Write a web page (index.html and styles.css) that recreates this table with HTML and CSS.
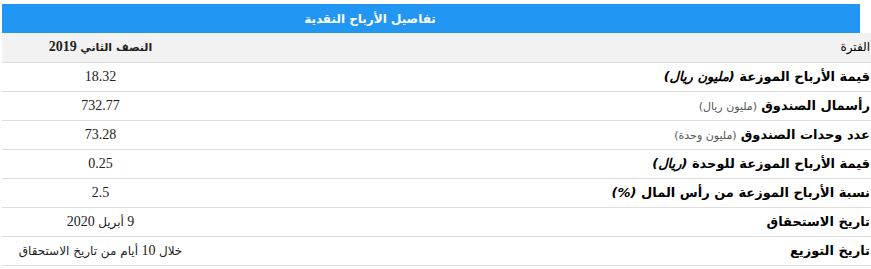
FILE: index.html
```html
<!DOCTYPE html>
<html lang="ar" dir="rtl">
<head>
<meta charset="utf-8">
<link rel="stylesheet" href="styles.css">
</head>
<body>
<div class="page">
  <div class="title-bar"><span class="title">تفاصيل الأرباح النقدية</span></div>
  <table class="details">
    <tr class="head-row">
      <td class="label">الفترة</td>
      <td class="value"><b><span class="ar">النصف الثاني</span> 2019</b></td>
    </tr>
    <tr>
      <td class="label"><b>قيمة الأرباح الموزعة <i>(مليون ريال)</i></b></td>
      <td class="value">18.32</td>
    </tr>
    <tr>
      <td class="label"><b>رأسمال الصندوق</b> <span class="unit">(مليون ريال)</span></td>
      <td class="value">732.77</td>
    </tr>
    <tr>
      <td class="label"><b>عدد وحدات الصندوق</b> <span class="unit">(مليون وحدة)</span></td>
      <td class="value">73.28</td>
    </tr>
    <tr>
      <td class="label"><b>قيمة الأرباح الموزعة للوحدة <i>(ريال)</i></b></td>
      <td class="value">0.25</td>
    </tr>
    <tr>
      <td class="label"><b>نسبة الأرباح الموزعة من رأس المال <i>(%)</i></b></td>
      <td class="value">2.5</td>
    </tr>
    <tr>
      <td class="label"><b>تاريخ الاستحقاق</b></td>
      <td class="value">9 <span class="ar">أبريل</span> 2020</td>
    </tr>
    <tr>
      <td class="label"><b>تاريخ التوزيع</b></td>
      <td class="value"><span class="ar">خلال</span> 10 <span class="ar">أيام من تاريخ الاستحقاق</span></td>
    </tr>
  </table>
</div>
</body>
</html>
```
FILE: styles.css
```css
html, body {
  margin: 0;
  padding: 0;
  background: #ffffff;
}
.page {
  direction: ltr;
  padding-top: 4px;
  width: 869px;
}
.title-bar {
  width: 858px;
  height: 29px;
  background: #2196f3;
  box-sizing: border-box;
  padding-right: 122px;
  display: flex;
  align-items: center;
  justify-content: center;
  direction: rtl;
}
.title {
  color: #ffffff;
  font-family: "DejaVu Sans", sans-serif;
  font-weight: bold;
  font-size: 12px;
}
.details {
  direction: rtl;
  width: 869px;
  border-collapse: collapse;
  font-family: "DejaVu Sans", sans-serif;
  font-size: 13px;
  color: #000000;
}
.details tr {
  height: 29px;
  border-bottom: 1px solid #dddddd;
}
.details td {
  padding: 0 1px;
  vertical-align: middle;
}
.head-row {
  background: #f2f2f2;
}
.label {
  text-align: right;
}
.head-row .label {
  font-weight: normal;
  font-size: 12px;
}
.value {
  width: 195px;
  text-align: center;
  font-family: "Liberation Serif", "DejaVu Sans", serif;
  font-size: 14px;
  color: #222222;
}
.ar {
  font-family: "DejaVu Sans", sans-serif;
  font-size: 12px;
}
.head-row .ar {
  font-size: 11px;
}
.unit {
  font-size: 11px;
  color: #555555;
}
```
